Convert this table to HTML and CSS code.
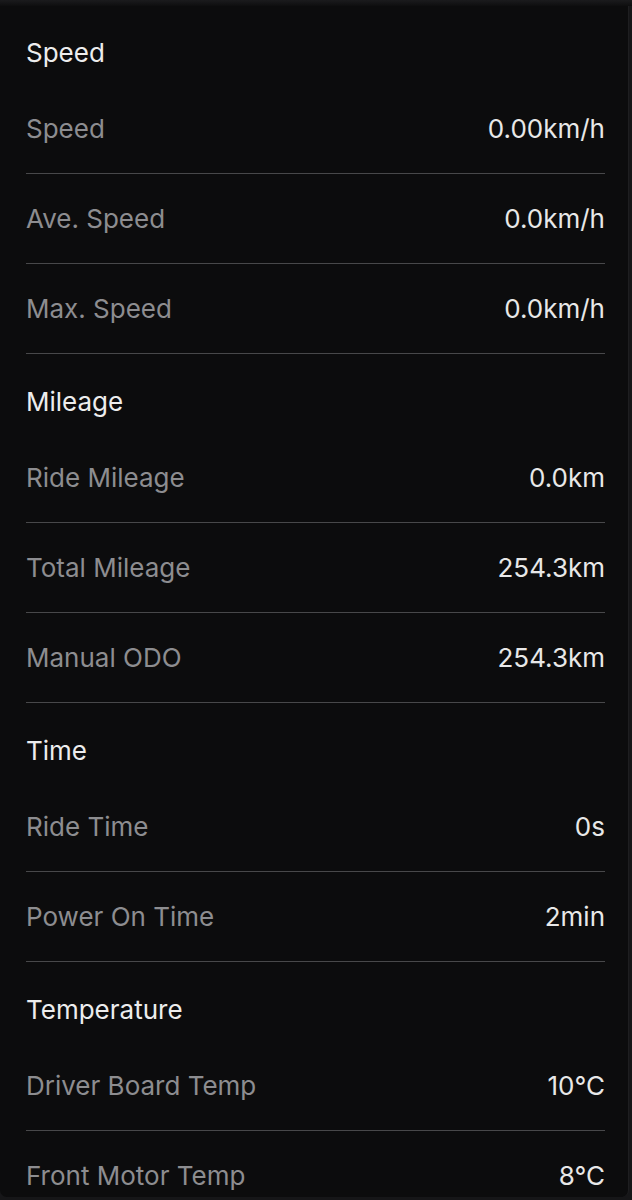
FILE: index.html
```html
<!DOCTYPE html>
<html>
<head>
<meta charset="utf-8">
<link rel="stylesheet" href="styles.css">
</head>
<body>
<div class="topfade"></div>
<div class="card">
  <div class="section-title first">Speed</div>
  <div class="row"><span class="label">Speed</span><span class="value">0.00km/h</span></div>
  <div class="row"><span class="label">Ave. Speed</span><span class="value">0.0km/h</span></div>
  <div class="row"><span class="label">Max. Speed</span><span class="value">0.0km/h</span></div>
  <div class="section-title">Mileage</div>
  <div class="row"><span class="label">Ride Mileage</span><span class="value">0.0km</span></div>
  <div class="row"><span class="label">Total Mileage</span><span class="value">254.3km</span></div>
  <div class="row"><span class="label">Manual ODO</span><span class="value">254.3km</span></div>
  <div class="section-title">Time</div>
  <div class="row"><span class="label">Ride Time</span><span class="value">0s</span></div>
  <div class="row"><span class="label">Power On Time</span><span class="value">2min</span></div>
  <div class="section-title">Temperature</div>
  <div class="row"><span class="label">Driver Board Temp</span><span class="value">10°C</span></div>
  <div class="row"><span class="label">Front Motor Temp</span><span class="value">8°C</span></div>
</div>
</body>
</html>
```

FILE: styles.css
```css
html, body {
  margin: 0;
  padding: 0;
}
body {
  background: #161618;
  font-family: Inter, "Liberation Sans", Arial, sans-serif;
  width: 632px;
  height: 1200px;
  overflow: hidden;
}
.topfade {
  height: 6px;
  background: linear-gradient(#1b1b1d, #0e0e0f);
}
.card {
  background: #0c0c0d;
  width: 629px;
  height: 1191px;
  border-radius: 0 0 7px 7px;
  overflow: hidden;
  box-sizing: border-box;
  padding: 0 23px 0 26px;
  border-right: 1px solid #1e1e20;
}
.section-title {
  font-size: 26px;
  line-height: 32px;
  padding: 32px 0 15px;
  color: #ededed;
}
.section-title.first {
  padding-top: 31px;
}
.row {
  display: flex;
  justify-content: space-between;
  align-items: center;
  font-size: 26px;
  line-height: 32px;
  padding: 29px 0 28px;
  border-bottom: 1px solid #48484a;
}
.row:last-child {
  border-bottom: none;
}
.label {
  color: #8d8d90;
}
.value {
  color: #e8e8e8;
}
```
